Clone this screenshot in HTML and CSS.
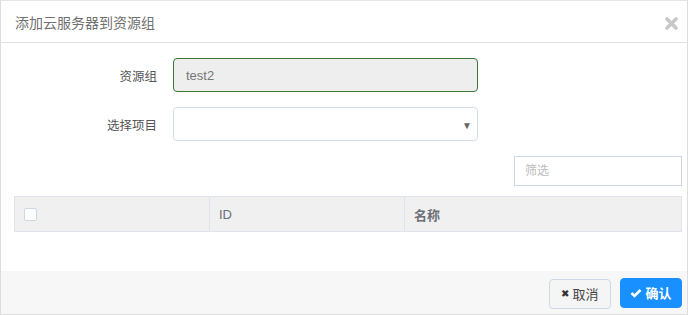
FILE: index.html
```html
<!DOCTYPE html>
<html>
<head>
  <title>添加云服务器到资源组</title>
  <link rel="stylesheet" href="styles.css">
</head>
<body>
  <div class="dialog">
    <div class="dialog-header">
      <span class="dialog-title">添加云服务器到资源组</span>
      <span class="btn-close">
        <svg width="13" height="13" viewBox="0 0 13 13"><path d="M2 2 L11 11 M11 2 L2 11" stroke="#c8c8c8" stroke-width="3.6" stroke-linecap="round"/></svg>
      </span>
    </div>

    <div class="dialog-body">
      <div class="form-row">
        <label class="form-label">资源组</label>
        <input class="form-input readonly" type="text" value="test2" readonly>
      </div>
      <div class="form-row">
        <label class="form-label">选择项目</label>
        <div class="form-select">
          <span class="caret">▼</span>
        </div>
      </div>

      <div class="filter-row">
        <input class="filter-input" type="text" placeholder="筛选">
      </div>

      <table class="vm-table">
        <tr>
          <th class="col-check"><span class="checkbox"></span></th>
          <th class="col-id">ID</th>
          <th>名称</th>
        </tr>
      </table>
    </div>

    <div class="dialog-footer">
      <button class="btn btn-cancel"><span class="icon">✖</span>取消</button>
      <button class="btn btn-ok">
        <svg width="12" height="10" viewBox="0 0 12 10"><path d="M1.5 5 L4.5 8 L10.5 2" stroke="#fff" stroke-width="2.6" fill="none"/></svg>确认</button>
    </div>
  </div>
</body>
</html>
```

FILE: styles.css
```css
* {
  box-sizing: border-box;
}

body {
  margin: 0;
  padding: 0;
  font-family: "Liberation Sans", "Noto Sans CJK SC", sans-serif;
  color: #666;
  background-color: #fff;
}

.dialog {
  width: 688px;
  height: 315px;
  border: 1px solid #ddd;
  border-top-color: #e6e6e6;
  display: flex;
  flex-direction: column;
}

.dialog-header {
  height: 42px;
  padding: 0 9px 0 14px;
  border-bottom: 1px solid #e0e0e6;
  display: flex;
  align-items: center;
  justify-content: space-between;
}

.dialog-title {
  font-size: 14px;
  color: #707070;
}

.btn-close {
  display: flex;
  margin-top: 3px;
}

.dialog-body {
  flex: 1;
  padding: 15px 5px 0 13px;
}

.form-row {
  display: flex;
  align-items: center;
  margin-bottom: 15px;
}

.form-label {
  width: 159px;
  padding-right: 16px;
  text-align: right;
  font-size: 12.5px;
  color: #555;
}

.form-input,
.form-select {
  width: 305px;
  height: 34px;
  border-radius: 4px;
  font-family: "Liberation Sans", "Noto Sans CJK SC", sans-serif;
  font-size: 13px;
}

.form-input.readonly {
  background-color: #eee;
  border: 1px solid #3c763d;
  color: #777;
  padding: 0 12px;
  outline: none;
}

.form-select {
  border: 1px solid #d5dde8;
  display: flex;
  align-items: center;
  justify-content: flex-end;
  padding-right: 5px;
}

.caret {
  font-size: 10px;
  color: #666;
  margin-top: 2px;
}

.filter-row {
  display: flex;
  justify-content: flex-end;
  margin-bottom: 10px;
}

.filter-input {
  width: 168px;
  height: 30px;
  border: 1px solid #ccd8e6;
  padding: 0 10px;
  font-size: 12px;
  font-family: "Liberation Sans", "Noto Sans CJK SC", sans-serif;
  outline: none;
}

.filter-input::placeholder {
  color: #bbb;
}

.vm-table {
  width: 668px;
  border-collapse: collapse;
  background-color: #f0f0f0;
}

.vm-table th {
  height: 35px;
  padding: 0 9px;
  text-align: left;
  font-size: 13px;
  font-weight: 600;
  color: #6b6f76;
  border: 1px solid #dfe3ea;
}

.vm-table .col-check,
.vm-table .col-id {
  width: 195px;
}

.vm-table .col-id {
  font-weight: normal;
}

.checkbox {
  display: block;
  width: 13px;
  height: 13px;
  background-color: #fff;
  border: 1px solid #cdd8e6;
  border-radius: 2px;
}

.dialog-footer {
  height: 43px;
  background-color: #f7f7f7;
  padding: 0 5px 0 0;
  display: flex;
  align-items: center;
  justify-content: flex-end;
  gap: 9px;
}

.btn {
  height: 30px;
  width: 62px;
  border-radius: 4px;
  font-family: "Liberation Sans", "Noto Sans CJK SC", sans-serif;
  font-size: 13px;
  display: flex;
  align-items: center;
  justify-content: center;
  gap: 3px;
  cursor: pointer;
}

.btn-cancel {
  background-color: #f5f5f5;
  border: 1px solid #ccd8e6;
  color: #444;
  margin-top: 2px;
}

.btn-cancel .icon {
  font-size: 10px;
  color: #333;
}

.btn-ok {
  background-color: #1890ff;
  border: 1px solid #1890ff;
  color: #fff;
  font-weight: 600;
}
```
